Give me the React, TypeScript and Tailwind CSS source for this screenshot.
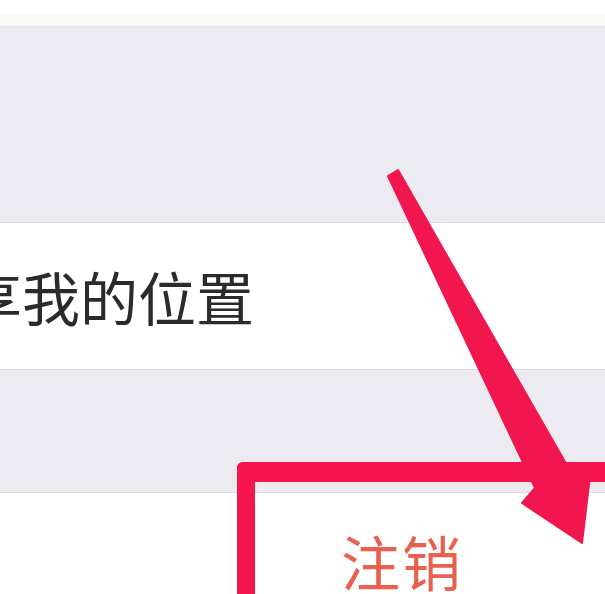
export default function App() {
  return (
    <div
      className="relative w-[605px] h-[594px] overflow-hidden bg-white"
      style={{ fontFamily: '"Noto Sans CJK SC", "Noto Sans", sans-serif' }}
    >
      {/* top edge of the previous cell */}
      <div className="h-[13px] bg-white" />
      <div className="h-[14px] bg-[#fafaf8] border-b border-[#e6e6ea]" />

      {/* group gap */}
      <div className="h-[196px] bg-[#ebebf1] border-b border-[#dcdce0]" />

      {/* share my location row */}
      <div className="h-[146px] bg-white flex items-center">
        <span className="ml-[-94px] text-[58px] leading-none text-[#2b2b2b] whitespace-nowrap">
          共享我的位置
        </span>
      </div>

      {/* group gap */}
      <div className="h-[124px] bg-[#ebebf1] border-t border-[#dcdce0] border-b" />

      {/* sign out row */}
      <div className="bg-white pl-[341px] pt-[38px]">
        <span className="text-[59px] leading-none text-[#e8604e] whitespace-nowrap tracking-[2px]">
          注销
        </span>
      </div>

      {/* annotation: highlight box */}
      <div className="absolute left-[237px] top-[462px] w-[420px] h-[200px] border-l-[18px] border-t-[20px] border-[#f5164d] rounded-tl-[6px]" />

      {/* annotation: arrow */}
      <svg
        className="absolute left-0 top-0"
        width="605"
        height="594"
        viewBox="0 0 605 594"
      >
        <polygon
          points="388,176 535,488 522,503 582,543 590,476 572,474 398,170"
          fill="#f2164f"
          stroke="#f2164f"
          strokeWidth="2"
          strokeLinejoin="round"
        />
      </svg>
    </div>
  );
}
